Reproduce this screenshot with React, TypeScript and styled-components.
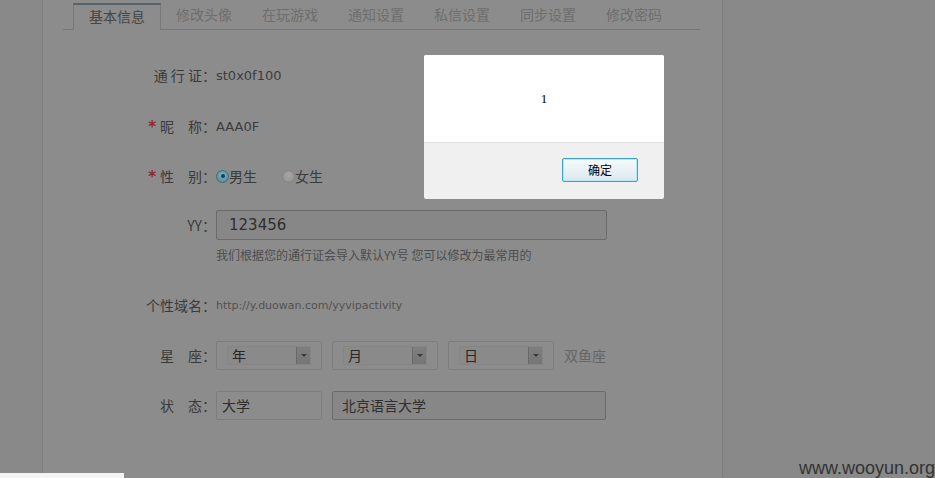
import React from "react";
import styled, { createGlobalStyle } from "styled-components";

const GlobalStyle = createGlobalStyle`
  html, body { margin: 0; padding: 0; background: #898989; }
  body { font-family: "Noto Sans CJK SC", "DejaVu Sans", sans-serif; }
  * { box-sizing: border-box; }
`;

const Viewport = styled.div`
  position: relative;
  display: flex;
  width: 935px;
  height: 478px;
  overflow: hidden;
  background: #898989;
`;

const Gutter = styled.div<{ $w?: number }>`
  flex: ${(p) => (p.$w ? `0 0 ${p.$w}px` : "1 1 auto")};
`;

const Panel = styled.div`
  flex: 0 0 681px;
  height: 100%;
  background: #8c8c8c;
  border-left: 1px solid #7f7f7f;
  border-right: 1px solid #7f7f7f;
  padding: 0 22px 0 20px;
`;

const Tabs = styled.div`
  display: flex;
  align-items: flex-end;
  height: 30px;
  padding-left: 10px;
  border-bottom: 1px solid #777777;
`;

const Tab = styled.div<{ $active?: boolean }>`
  flex: 0 0 ${(p) => (p.$active ? 88 : 86)}px;
  height: ${(p) => (p.$active ? 27 : 26)}px;
  display: flex;
  align-items: center;
  justify-content: center;
  font-size: 14px;
  color: ${(p) => (p.$active ? "#444444" : "#6e6e6e")};
  background: #8c8c8c;
  padding-bottom: ${(p) => (p.$active ? 4 : 5)}px;
  ${(p) =>
    p.$active
      ? `
    border-top: 2px solid #58626b;
    border-left: 1px solid #787878;
    border-right: 1px solid #787878;
    margin-bottom: -1px;
  `
      : ""}
`;

const Form = styled.div`
  padding: 30px 0 0 53px;
`;

const Row = styled.div<{ $mt: number; $h?: number }>`
  display: grid;
  grid-template-columns: 100px 1fr;
  align-items: center;
  height: ${(p) => p.$h ?? 30}px;
  margin-top: ${(p) => p.$mt}px;
`;

const Label = styled.div`
  display: flex;
  align-items: center;
  justify-content: flex-end;
  font-size: 14px;
  color: #3a3a3a;
  white-space: pre;
`;

const Star = styled.span`
  color: #8e2a2f;
  font-family: "DejaVu Sans", sans-serif;
  font-weight: bold;
  font-size: 15px;
  line-height: 1;
  margin: 3px 4px 0 0;
`;

const Value = styled.div`
  font-family: "DejaVu Sans", sans-serif;
  font-size: 13px;
  color: #3c3c3c;
`;

const RadioGroup = styled.div`
  display: flex;
  align-items: center;
  font-size: 14px;
  color: #3a3a3a;
`;

const RadioItem = styled.label`
  display: flex;
  align-items: center;
  margin-right: 25px;
`;

const RadioDot = styled.span<{ $checked?: boolean }>`
  display: inline-flex;
  align-items: center;
  justify-content: center;
  width: 13px;
  height: 13px;
  border-radius: 50%;
  border: 1px solid ${(p) => (p.$checked ? "#3a6c7e" : "#858585")};
  background: ${(p) =>
    p.$checked
      ? "radial-gradient(circle at 50% 40%, #7eb0c2, #4e8599)"
      : "radial-gradient(circle at 50% 40%, #a6a6a6, #8f8f8f)"};
  &::after {
    content: "";
    width: 4px;
    height: 4px;
    border-radius: 50%;
    background: ${(p) => (p.$checked ? "#1d3f4c" : "transparent")};
  }
`;

const TextInput = styled.div<{ $w: number; $dark?: boolean; $h?: number; $pl?: number; $big?: boolean }>`
  width: ${(p) => p.$w}px;
  height: ${(p) => p.$h ?? 29}px;
  display: flex;
  align-items: center;
  padding-left: ${(p) => p.$pl ?? 5}px;
  border: 1px solid ${(p) => (p.$dark ? "#6b6b6b" : "#7e7e7e")};
  border-radius: 2px;
  background: ${(p) => (p.$dark ? "#878787" : "#8c8c8c")};
  font-family: ${(p) => (p.$big ? '"DejaVu Sans", sans-serif' : '"Noto Sans CJK SC", sans-serif')};
  font-size: ${(p) => (p.$big ? 15 : 14)}px;
  color: #2e2e2e;
`;

const Help = styled.div`
  font-size: 12px;
  line-height: 18px;
  color: #4d4d4d;
`;

const Url = styled.div`
  font-family: "DejaVu Sans", sans-serif;
  font-size: 11px;
  color: #525252;
`;

const Inline = styled.div`
  display: flex;
  align-items: center;
  gap: 10px;
`;

const SelectBox = styled.div`
  width: 106px;
  height: 29px;
  border: 1px solid #7e7e7e;
  border-radius: 2px;
  padding: 4px 10px 4px 10px;
  display: flex;
`;

const SelectInner = styled.div`
  flex: 1;
  display: flex;
  border: 1px solid #858585;
  background: #8a8a8a;
`;

const SelectText = styled.div`
  flex: 1;
  display: flex;
  align-items: center;
  padding-left: 4px;
  font-size: 14px;
  color: #262626;
`;

const SelectArrow = styled.div`
  width: 14px;
  display: flex;
  align-items: center;
  justify-content: center;
  background: linear-gradient(#7e7e7e, #767676);
  border-left: 1px solid #6a6a6a;
  &::after {
    content: "";
    border-left: 3px solid transparent;
    border-right: 3px solid transparent;
    border-top: 3px solid #3a3a3a;
  }
`;

const Zodiac = styled.div`
  font-size: 14px;
  color: #666666;
`;

const Dialog = styled.div`
  position: absolute;
  left: 424px;
  top: 55px;
  width: 240px;
  height: 144px;
  display: flex;
  flex-direction: column;
  background: #f0f0f0;
  border-radius: 2px;
  overflow: hidden;
`;

const DialogBody = styled.div`
  height: 88px;
  background: #ffffff;
  display: flex;
  align-items: center;
  justify-content: center;
  font-family: "Liberation Serif", serif;
  font-size: 13px;
  color: #000;
  border-bottom: 1px solid #e2e2e2;
  padding-top: 1px;
`;

const DialogFooter = styled.div`
  flex: 1;
  display: flex;
  align-items: center;
  justify-content: flex-end;
  padding: 0 26px 0 0;
`;

const OkButton = styled.button`
  width: 76px;
  height: 24px;
  border: 1px solid #3ea3c6;
  border-radius: 2px;
  background: linear-gradient(#f6fbfd, #dce8ee);
  box-shadow: inset 0 0 0 1px #b5e8f7;
  font-family: "Noto Sans CJK SC", sans-serif;
  font-size: 12px;
  color: #000;
  padding: 0;
  margin-top: -3px;
`;

const BottomBar = styled.div`
  position: absolute;
  left: 0;
  bottom: 0;
  width: 124px;
  height: 5px;
  background: #f4f4f4;
`;

const Watermark = styled.div`
  position: absolute;
  right: 0;
  bottom: 0;
  font-family: "Liberation Sans", Arial, sans-serif;
  font-size: 18px;
  line-height: 20px;
  color: #333333;
`;

const tabs = ["基本信息", "修改头像", "在玩游戏", "通知设置", "私信设置", "同步设置", "修改密码"];

export default function App() {
  return (
    <>
      <GlobalStyle />
      <Viewport>
        <Gutter $w={42} />
        <Panel>
          <Tabs>
            {tabs.map((t, i) => (
              <Tab key={t} $active={i === 0}>
                {t}
              </Tab>
            ))}
          </Tabs>
          <Form>
            <Row $mt={0}>
              <Label>通 行 证：</Label>
              <Value>st0x0f100</Value>
            </Row>
            <Row $mt={21}>
              <Label>
                <Star>*</Star>昵　称：
              </Label>
              <Value>AAA0F</Value>
            </Row>
            <Row $mt={20}>
              <Label>
                <Star>*</Star>性　别：
              </Label>
              <RadioGroup>
                <RadioItem>
                  <RadioDot $checked />
                  男生
                </RadioItem>
                <RadioItem>
                  <RadioDot />
                  女生
                </RadioItem>
              </RadioGroup>
            </Row>
            <Row $mt={19}>
              <Label>YY：</Label>
              <TextInput $w={391} $h={30} $dark $pl={12} $big>
                123456
              </TextInput>
            </Row>
            <Row $mt={6} $h={18}>
              <Label />
              <Help>我们根据您的通行证会导入默认YY号 您可以修改为最常用的</Help>
            </Row>
            <Row $mt={26}>
              <Label>个性域名：</Label>
              <Url>http://y.duowan.com/yyvipactivity</Url>
            </Row>
            <Row $mt={20}>
              <Label>星　座：</Label>
              <Inline>
                <SelectBox>
                  <SelectInner>
                    <SelectText>年</SelectText>
                    <SelectArrow />
                  </SelectInner>
                </SelectBox>
                <SelectBox>
                  <SelectInner>
                    <SelectText>月</SelectText>
                    <SelectArrow />
                  </SelectInner>
                </SelectBox>
                <SelectBox>
                  <SelectInner>
                    <SelectText>日</SelectText>
                    <SelectArrow />
                  </SelectInner>
                </SelectBox>
                <Zodiac>双鱼座</Zodiac>
              </Inline>
            </Row>
            <Row $mt={20}>
              <Label>状　态：</Label>
              <Inline>
                <TextInput $w={106}>大学</TextInput>
                <TextInput $w={274} $dark $pl={9}>
                  北京语言大学
                </TextInput>
              </Inline>
            </Row>
          </Form>
        </Panel>
        <Gutter />
        <Dialog>
          <DialogBody>1</DialogBody>
          <DialogFooter>
            <OkButton>确定</OkButton>
          </DialogFooter>
        </Dialog>
        <BottomBar />
        <Watermark>www.wooyun.org</Watermark>
      </Viewport>
    </>
  );
}
